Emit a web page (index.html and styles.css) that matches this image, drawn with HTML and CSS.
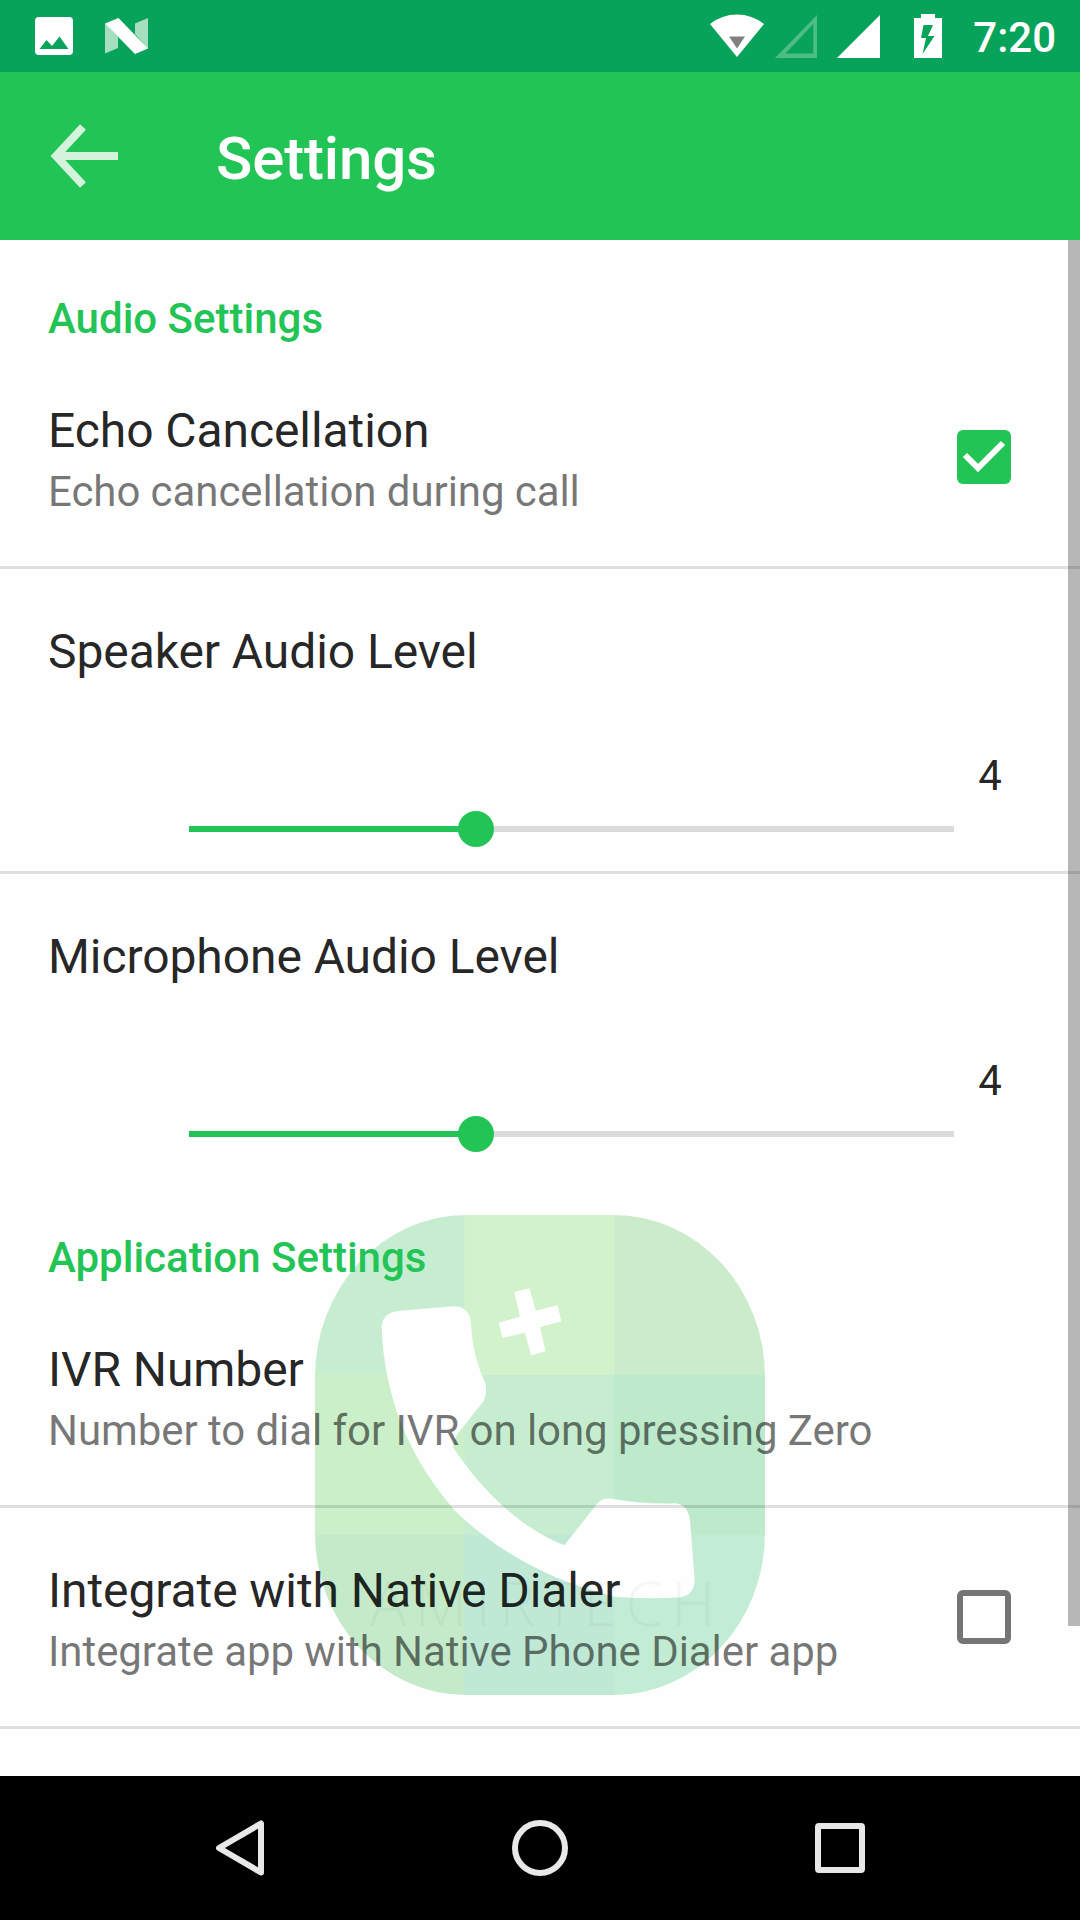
FILE: index.html
```
<!DOCTYPE html>
<html lang="en">
<head>
    <meta charset="UTF-8">
    <meta name="viewport" content="width=device-width, initial-scale=1.0">
    <title>Settings</title>
    <link rel="stylesheet" href="styles.css">
</head>
<body>
    <div class="screen">
        <div class="status-bar">
            <div class="status-left">
                <svg width="38" height="38" viewBox="0 0 38 38">
                    <path fill="#fff" fill-rule="evenodd" d="M4 0h30a4 4 0 0 1 4 4v30a4 4 0 0 1-4 4H4a4 4 0 0 1-4-4V4a4 4 0 0 1 4-4zM4.500 32h29L24.500 19.500l-7.500 9.500-5.500-6z"/>
                </svg>
                <svg width="43" height="36" viewBox="0 0 43 36">
                    <path fill="#a5dfc0" d="M0 5l13 14v11L0 35.500zM30 5.500L43 0v31L30 16z"/>
                    <path fill="#fff" d="M0 5.500L13.500 0 43 30.500 30 36z"/>
                </svg>
            </div>
            <div class="status-right">
                <svg class="wifi" width="54" height="44" viewBox="0 0 54 44">
                    <path fill="#fff" d="M0 10Q12 .5 27 .5T54 10L27 43z"/>
                    <path fill="#808080" d="M19 22.500h16L27 34.500z"/>
                </svg>
                <svg class="signal-empty" width="42" height="43" viewBox="0 0 42 43">
                    <path fill="#4ebd85" fill-rule="evenodd" d="M42 0v43H0zM38.300 9L10.500 38.500h27.800z"/>
                </svg>
                <svg class="signal" width="43" height="43" viewBox="0 0 43 43">
                    <path fill="#fff" d="M43 0v43H0z"/>
                </svg>
                <svg class="battery" width="28" height="44" viewBox="0 0 28 44">
                    <path fill="#fff" fill-rule="evenodd" d="M7 0h14v4h7v40H0V4h7zM9.500 11L7 24h5l-3.500 16L20.500 22h-6.500L19 11z"/>
                </svg>
                <span class="clock">7:20</span>
            </div>
        </div>

        <div class="app-bar">
            <svg class="back" width="68" height="64" viewBox="0 0 68 64">
                <path fill="none" stroke="#d3f3dd" stroke-width="8" d="M33 3L6 32l27 29M7 32h61"/>
            </svg>
            <h1>Settings</h1>
        </div>

        <div class="content">
            <!-- app logo watermark behind the list -->
            <svg class="watermark" viewBox="0 0 1350 1440">
                <defs>
                    <clipPath id="logoShape">
                        <rect width="1350" height="1440" rx="455" ry="485"/>
                    </clipPath>
                </defs>
                <g clip-path="url(#logoShape)">
                    <rect x="0" y="0" width="450" height="480" fill="#c7edd0"/>
                    <rect x="448" y="0" width="452" height="480" fill="#d2f2cb"/>
                    <rect x="898" y="0" width="452" height="480" fill="#cbeccb"/>
                    <rect x="0" y="475" width="450" height="488" fill="#cbefc9"/>
                    <rect x="448" y="480" width="452" height="482" fill="#c6edcf"/>
                    <rect x="898" y="480" width="452" height="482" fill="#bdeacb"/>
                    <rect x="0" y="960" width="450" height="480" fill="#c4eac9"/>
                    <rect x="448" y="960" width="452" height="480" fill="#bfe8d5"/>
                    <rect x="898" y="960" width="452" height="480" fill="#c2ecd3"/>
                </g>
                <g transform="translate(-75 -75)" fill="#fefefe">
                    <path d="M275 415Q275 368 325 363L490 349Q538 348 543 400C546 470 560 520 586 580Q593 612 578 637L500 735L488 770C570 895 690 1015 823 1066L925 937Q943 921 975 928Q1060 943 1155 940Q1194 944 1200 990L1214 1170Q1212 1216 1170 1222Q1080 1229 975 1220C760 1170 600 1065 495 962C370 820 284 640 275 415z"/>
                    <path d="M673 306L718 295L737 362L803 346L814 394L750 412L767 484L724 496L704 428L638 444L626 398L690 380z"/>
                </g>
                <text class="brand" x="165" y="1232" textLength="1035">AMIRTECH</text>
            </svg>

            <div class="list">
                <h2>Audio Settings</h2>
                <div class="row">
                    <div class="row-text">
                        <div class="title">Echo Cancellation</div>
                        <div class="summary">Echo cancellation during call</div>
                    </div>
                    <div class="checkbox checked">
                        <svg width="54" height="54" viewBox="0 0 54 54">
                            <path fill="none" stroke="#fff" stroke-width="6" d="M8 25l13 13L46 13"/>
                        </svg>
                    </div>
                </div>
                <div class="slider-row">
                    <div class="title">Speaker Audio Level</div>
                    <div class="slider">
                        <div class="track">
                            <div class="fill" style="width: 37.5%"></div>
                            <div class="thumb" style="left: 37.5%"></div>
                        </div>
                        <div class="value">4</div>
                    </div>
                </div>
                <div class="slider-row last">
                    <div class="title">Microphone Audio Level</div>
                    <div class="slider">
                        <div class="track">
                            <div class="fill" style="width: 37.5%"></div>
                            <div class="thumb" style="left: 37.5%"></div>
                        </div>
                        <div class="value">4</div>
                    </div>
                </div>

                <h2>Application Settings</h2>
                <div class="row">
                    <div class="row-text">
                        <div class="title">IVR Number</div>
                        <div class="summary">Number to dial for IVR on long pressing Zero</div>
                    </div>
                </div>
                <div class="row">
                    <div class="row-text">
                        <div class="title">Integrate with Native Dialer</div>
                        <div class="summary">Integrate app with Native Phone Dialer app</div>
                    </div>
                    <div class="checkbox"></div>
                </div>
            </div>
            <div class="scrollbar"></div>
        </div>

        <div class="nav-bar">
            <svg width="56" height="56" viewBox="0 0 56 56">
                <path fill="none" stroke="#e8e8e8" stroke-width="6" stroke-linejoin="round" d="M49 3.500v49L7 28z"/>
            </svg>
            <svg width="56" height="56" viewBox="0 0 56 56">
                <circle cx="28" cy="28" r="25" fill="none" stroke="#e8e8e8" stroke-width="6"/>
            </svg>
            <svg width="56" height="56" viewBox="0 0 56 56">
                <rect x="6" y="6" width="44" height="44" rx="1" fill="none" stroke="#e8e8e8" stroke-width="6"/>
            </svg>
        </div>
    </div>
</body>
</html>
```

FILE: styles.css
```
* {
    box-sizing: border-box;
}

body {
    margin: 0;
    font-family: Roboto, sans-serif;
    background-color: #fefefe;
}

svg {
    display: block;
}

.screen {
    width: 1080px;
    height: 1920px;
    display: flex;
    flex-direction: column;
    overflow: hidden;
}

/* status bar */
.status-bar {
    height: 72px;
    background-color: #08a35a;
    display: flex;
    justify-content: space-between;
    padding: 0 24px 0 35px;
}

.status-left {
    display: flex;
    align-items: center;
    gap: 32px;
}

.status-right {
    display: flex;
    align-items: center;
}

.signal-empty {
    margin-left: 11px;
}

.signal {
    margin-left: 20px;
}

.battery {
    margin-left: 34px;
}

.clock {
    margin-left: 31px;
    font-size: 42px;
    font-weight: 500;
    line-height: 50px;
    color: #fff;
    padding-top: 4px;
}

/* app bar */
.app-bar {
    height: 168px;
    background-color: #23c456;
    display: flex;
    align-items: center;
    padding-left: 50px;
}

.app-bar h1 {
    margin: 5px 0 0 98px;
    font-size: 60px;
    font-weight: 500;
    line-height: 70px;
    letter-spacing: -0.15px;
    color: #fff;
}

/* settings list */
.content {
    flex: 1;
    position: relative;
    overflow: hidden;
}

.watermark {
    position: absolute;
    left: 315px;
    top: 975px;
    width: 450px;
    height: 480px;
}

.brand {
    font-family: "Open Sans", sans-serif;
    font-weight: 300;
    font-size: 182px;
    fill: rgba(0, 0, 0, 0.03);
}

.list {
    position: relative;
}

.list h2 {
    margin: 0;
    height: 108px;
    padding: 54px 48px 0;
    font-size: 42px;
    font-weight: 500;
    line-height: 50px;
    color: #23c456;
}

.title {
    font-size: 48px;
    line-height: 56px;
    letter-spacing: -0.08px;
    color: rgba(0, 0, 0, 0.87);
}

.summary {
    margin-top: 8px;
    font-size: 42px;
    line-height: 50px;
    letter-spacing: -0.07px;
    color: rgba(0, 0, 0, 0.54);
}

.row {
    height: 221px;
    border-bottom: 3px solid rgba(0, 0, 0, 0.12);
    padding: 0 69px 0 48px;
    display: flex;
    align-items: center;
    justify-content: space-between;
}

.row-text {
    padding-top: 6px;
}

.checkbox {
    width: 54px;
    height: 54px;
    border: 6px solid rgba(0, 0, 0, 0.54);
    border-radius: 6px;
}

.checkbox.checked {
    border: none;
    background-color: #23c456;
}

.slider-row {
    height: 305px;
    border-bottom: 3px solid rgba(0, 0, 0, 0.12);
    padding: 55px 54px 0 48px;
}

.slider-row.last {
    border-bottom: none;
}

.slider {
    display: flex;
    padding-left: 141px;
}

.track {
    position: relative;
    flex: 1;
    height: 6px;
    margin-top: 146px;
    background-color: #dbdbdb;
}

.fill {
    height: 6px;
    background-color: #23c456;
}

.thumb {
    position: absolute;
    top: -15px;
    width: 36px;
    height: 36px;
    margin-left: -18px;
    border-radius: 50%;
    background-color: #23c456;
}

.value {
    width: 72px;
    margin-top: 71px;
    font-size: 42px;
    line-height: 50px;
    text-align: center;
    color: rgba(0, 0, 0, 0.87);
}

.scrollbar {
    position: absolute;
    top: 0;
    right: 0;
    width: 12px;
    height: 1386px;
    background-color: rgba(0, 0, 0, 0.28);
}

/* navigation bar */
.nav-bar {
    height: 144px;
    background-color: #000;
    display: flex;
    align-items: center;
    justify-content: center;
    gap: 244px;
}
```
